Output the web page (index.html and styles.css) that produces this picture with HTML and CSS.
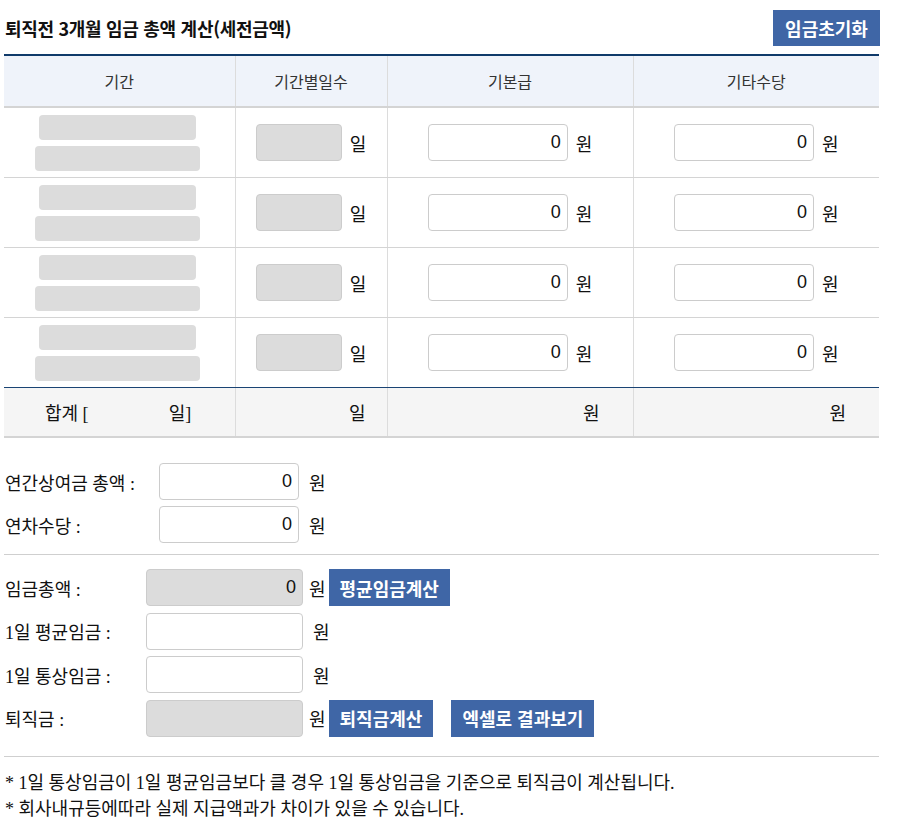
FILE: index.html
```html
<!DOCTYPE html>
<html lang="ko">
<head>
  <meta charset="UTF-8" />
  <title>퇴직금 계산</title>
  <link rel="stylesheet" href="styles.css">
</head>
<body>
  <div class="wrap">
    <div class="title-bar">
      <h2>퇴직전 3개월 임금 총액 계산(세전금액)</h2>
      <button class="btn btn-reset">임금초기화</button>
    </div>

    <table class="wage-table">
      <colgroup>
        <col style="width:231px">
        <col style="width:152px">
        <col style="width:246px">
        <col style="width:246px">
      </colgroup>
      <thead>
        <tr>
          <th>기간</th>
          <th>기간별일수</th>
          <th>기본급</th>
          <th>기타수당</th>
        </tr>
      </thead>
      <tbody>
        <tr>
          <td class="period"><div class="ph ph-a"></div><div class="ph ph-b"></div></td>
          <td class="center"><span class="in in-days in-off"></span><span class="unit">일</span></td>
          <td class="center"><input class="in in-money" value="0"><span class="unit">원</span></td>
          <td class="center"><input class="in in-money" value="0"><span class="unit">원</span></td>
        </tr>
        <tr>
          <td class="period"><div class="ph ph-a"></div><div class="ph ph-b"></div></td>
          <td class="center"><span class="in in-days in-off"></span><span class="unit">일</span></td>
          <td class="center"><input class="in in-money" value="0"><span class="unit">원</span></td>
          <td class="center"><input class="in in-money" value="0"><span class="unit">원</span></td>
        </tr>
        <tr>
          <td class="period"><div class="ph ph-a"></div><div class="ph ph-b"></div></td>
          <td class="center"><span class="in in-days in-off"></span><span class="unit">일</span></td>
          <td class="center"><input class="in in-money" value="0"><span class="unit">원</span></td>
          <td class="center"><input class="in in-money" value="0"><span class="unit">원</span></td>
        </tr>
        <tr>
          <td class="period"><div class="ph ph-a"></div><div class="ph ph-b"></div></td>
          <td class="center"><span class="in in-days in-off"></span><span class="unit">일</span></td>
          <td class="center"><input class="in in-money" value="0"><span class="unit">원</span></td>
          <td class="center"><input class="in in-money" value="0"><span class="unit">원</span></td>
        </tr>
      </tbody>
      <tfoot>
        <tr>
          <td class="sum-first"><span>합계 [</span><span>일]</span></td>
          <td class="sum-right sum-days">일</td>
          <td class="sum-right">원</td>
          <td class="sum-right">원</td>
        </tr>
      </tfoot>
    </table>

    <div class="form-block first">
      <div class="form-row">
        <label class="lbl lbl-wide">연간상여금 총액 :</label>
        <input class="in in-money" value="0"><span class="unit">원</span>
      </div>
      <div class="form-row">
        <label class="lbl lbl-wide">연차수당 :</label>
        <input class="in in-money" value="0"><span class="unit">원</span>
      </div>
    </div>

    <hr class="line line-first">

    <div class="form-block second">
      <div class="form-row">
        <label class="lbl">임금총액 :</label>
        <input class="in in-result in-off" value="0"><span class="unit tight">원</span>
        <button class="btn btn-small">평균임금계산</button>
      </div>
      <div class="form-row">
        <label class="lbl">1일 평균임금 :</label>
        <input class="in in-result" value=""><span class="unit">원</span>
      </div>
      <div class="form-row">
        <label class="lbl">1일 통상임금 :</label>
        <input class="in in-result" value=""><span class="unit">원</span>
      </div>
      <div class="form-row">
        <label class="lbl">퇴직금 :</label>
        <input class="in in-result in-off" value=""><span class="unit tight">원</span>
        <button class="btn btn-small">퇴직금계산</button>
        <button class="btn btn-small btn-excel">엑셀로 결과보기</button>
      </div>
    </div>

    <hr class="line line-second">

    <div class="notes">
      <p>* 1일 통상임금이 1일 평균임금보다 클 경우 1일 통상임금을 기준으로 퇴직금이 계산됩니다.</p>
      <p>* 회사내규등에따라 실제 지급액과가 차이가 있을 수 있습니다.</p>
    </div>
  </div>
</body>
</html>
```

FILE: styles.css
```css
body {
  margin: 0;
  padding: 0;
  background: #fff;
  color: #111;
  font-family: "Liberation Serif", "Noto Sans CJK KR", serif;
  font-size: 18px;
}
.wrap {
  width: 875px;
  margin: 0 4px;
}
.title-bar {
  display: flex;
  justify-content: space-between;
  align-items: center;
  height: 54px;
  padding-top: 2px;
  box-sizing: border-box;
}
.title-bar h2 {
  margin: 0 0 0 1px;
  font-family: "Noto Sans CJK KR", sans-serif;
  font-size: 18px;
  font-weight: bold;
  letter-spacing: -0.3px;
  color: #111;
}
.btn {
  background: #3f66a6;
  color: #fff;
  border: none;
  font-family: "Noto Sans CJK KR", sans-serif;
  font-weight: bold;
  cursor: pointer;
}
.btn-reset {
  width: 107px;
  height: 36px;
  font-size: 18px;
  padding: 0;
  margin-right: -1px;
  margin-top: -1px;
}
.wage-table {
  width: 875px;
  border-collapse: collapse;
  table-layout: fixed;
  border-top: 2px solid #0f3a6a;
}
.wage-table th {
  height: 50px;
  background: #eff3fa;
  font-family: "Noto Sans CJK KR", sans-serif;
  font-weight: normal;
  font-size: 16px;
  color: #333;
  border-left: 1px solid #dcdcdc;
  border-bottom: 2px solid #d4d4d4;
  padding: 0;
}
.wage-table td {
  height: 69px;
  padding: 0;
  border-left: 1px solid #dcdcdc;
  border-bottom: 1px solid #d4d4d4;
}
.wage-table th:first-child,
.wage-table td:first-child {
  border-left: none;
}
.wage-table tbody tr:last-child td {
  border-bottom: 1px solid #1a4474;
}
.period {
  text-align: center;
}
.ph {
  background: #dcdcdc;
  border-radius: 4px;
  height: 25px;
  margin: 0 auto;
  position: relative;
  left: -2px;
}
.ph-a {
  width: 157px;
  margin-bottom: 6px;
}
.ph-b {
  width: 165px;
}
.center {
  text-align: center;
  white-space: nowrap;
}
.in {
  display: inline-block;
  vertical-align: middle;
  box-sizing: border-box;
  height: 37px;
  border: 1px solid #cccccc;
  border-radius: 4px;
  background: #fff;
  font-family: "Liberation Sans", sans-serif;
  font-size: 18px;
  color: #111;
  text-align: right;
  padding: 0 6px 0 10px;
}
.in-off {
  background: #dcdcdc;
}
.in-days {
  width: 86px;
}
.in-money {
  width: 140px;
}
.in-result {
  width: 157px;
}
.unit {
  display: inline-block;
  vertical-align: middle;
  margin-left: 8px;
}
.wage-table tfoot td {
  height: 48px;
  background: #f5f5f5;
  border-bottom: 2px solid #d4d4d4;
}
.sum-first span:first-child {
  margin-left: 41px;
}
.sum-first span:last-child {
  margin-left: 80px;
}
.sum-right {
  text-align: right;
  padding-right: 33px !important;
}
.sum-days {
  padding-right: 21px !important;
}
.form-block {
  display: flex;
  flex-direction: column;
  padding: 0 1px;
}
.form-block.first {
  margin-top: 25px;
  gap: 6px;
}
.form-block.second {
  margin-top: 14px;
  gap: 6.5px;
}
.form-row {
  display: flex;
  align-items: center;
  height: 37px;
}
.lbl {
  width: 141px;
  flex-shrink: 0;
}
.lbl-wide {
  width: 154px;
}
.form-row .unit {
  margin-left: 10px;
}
.form-row .unit.tight {
  margin-left: 6px;
}
.btn-small {
  height: 37px;
  padding: 0 11px;
  font-size: 18px;
  margin-left: 3px;
}
.btn-excel {
  margin-left: 18px;
}
.line {
  border: none;
  border-top: 1px solid #cfcfcf;
  margin: 0;
}
.line-first {
  margin-top: 11px;
}
.line-second {
  margin-top: 19px;
}
.notes {
  margin-top: 13px;
  padding-left: 1px;
}
.notes p {
  margin: 0;
  line-height: 26px;
}
```
